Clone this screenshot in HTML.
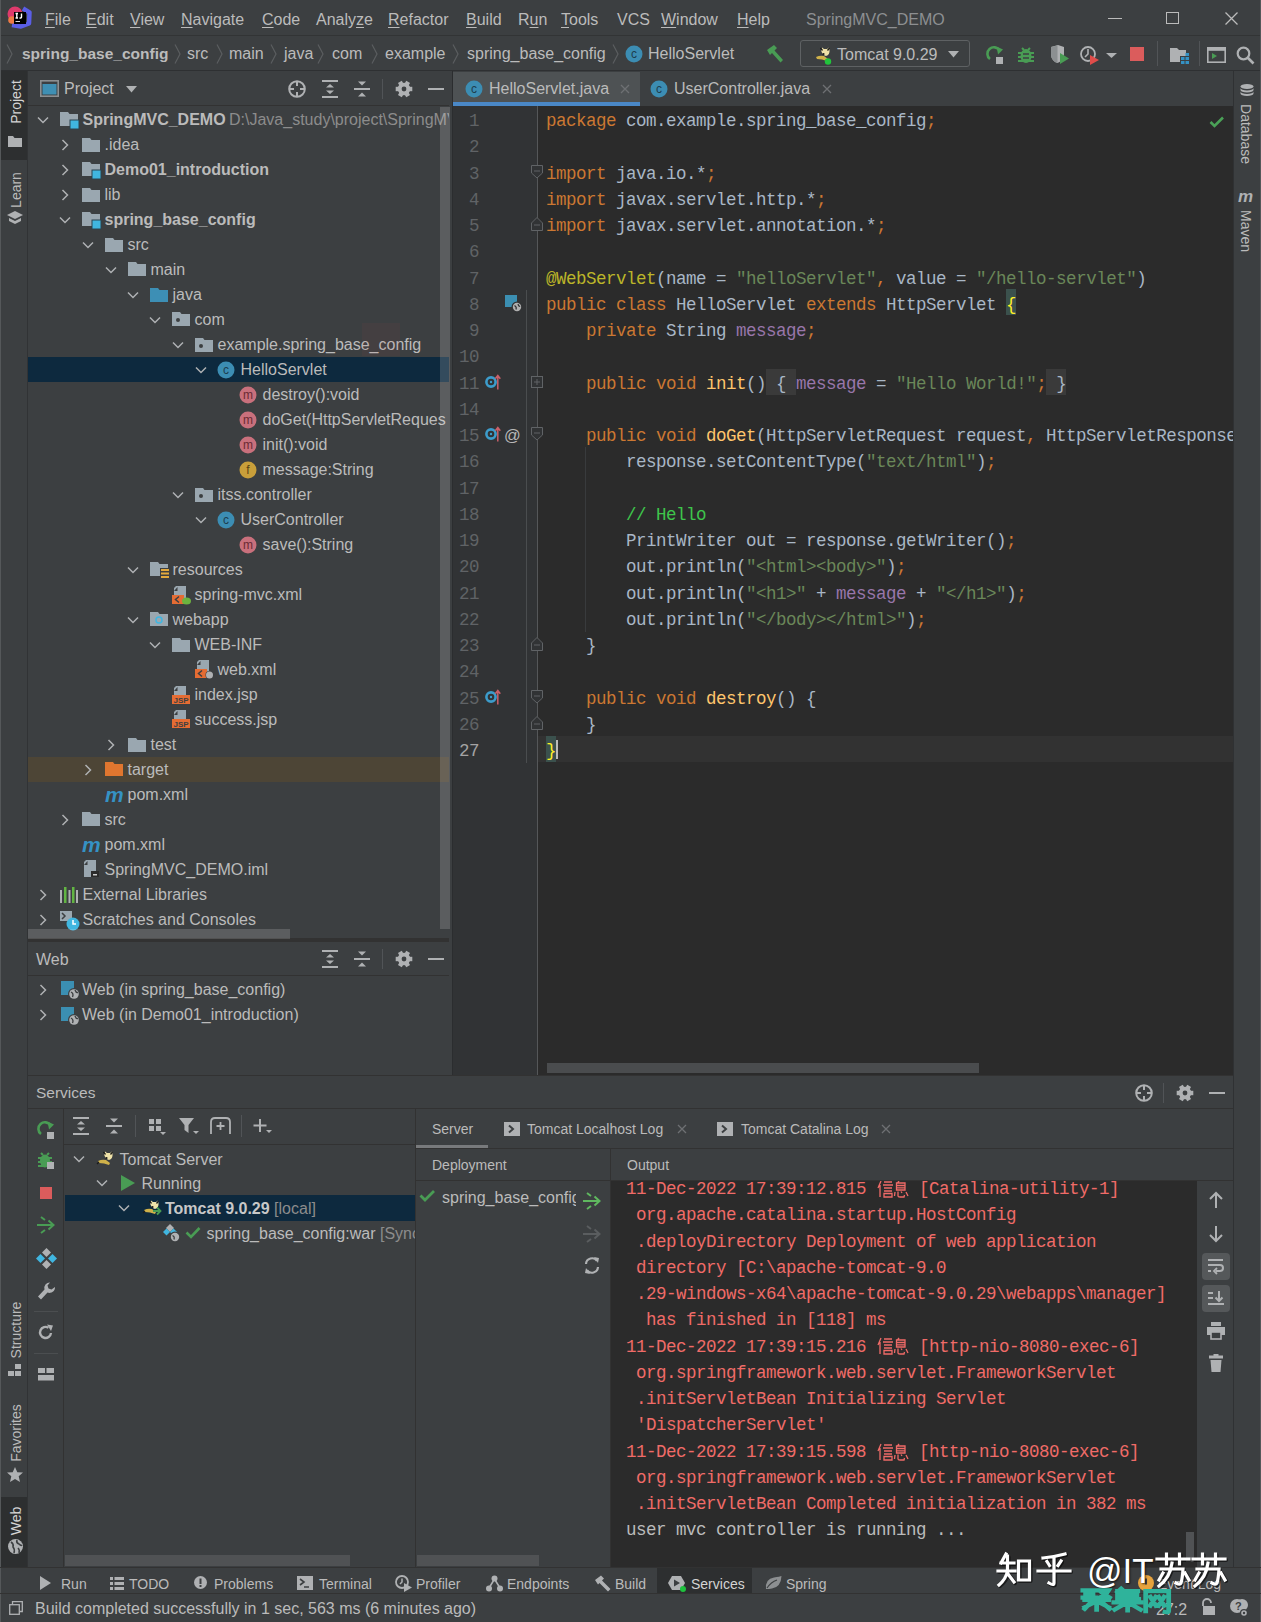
<!DOCTYPE html><html><head><meta charset="utf-8"><style>
*{margin:0;padding:0;box-sizing:border-box}
html,body{width:1261px;height:1622px;overflow:hidden;background:#3c3f41;font-family:"Liberation Sans",sans-serif;font-size:16px;color:#bbbbbb}
.a{position:absolute}
.t{position:absolute;white-space:pre;line-height:20px}
.m{font-family:"Liberation Mono",monospace;font-size:17.5px;letter-spacing:-0.5px}
.b{font-weight:bold}
svg{position:absolute;overflow:visible}
</style></head><body>
<div class="a" style="left:0px;top:35px;width:1261px;height:1px;background:#323435;"></div>
<div class="a" style="left:0px;top:70px;width:1261px;height:1px;background:#2e3032;"></div>
<div class="a" style="left:27px;top:71px;width:1px;height:1497px;background:#313335;"></div>
<div class="a" style="left:1px;top:71px;width:26px;height:89px;background:#2d2f30;"></div>
<div class="a" style="left:1px;top:1497px;width:26px;height:70px;background:#2d2f30;"></div>
<div class="a" style="left:0px;top:0px;width:1px;height:1622px;background:#55585a;"></div>
<div class="a" style="left:28px;top:105px;width:421px;height:1px;background:#323232;"></div>
<div class="a" style="left:449px;top:71px;width:3px;height:1004px;background:#3c3f41;"></div>
<div class="a" style="left:452px;top:71px;width:1px;height:1004px;background:#2b2d2f;"></div>
<div class="a" style="left:453px;top:106px;width:2px;height:969px;background:#2f3133;"></div>
<div class="a" style="left:28px;top:938px;width:421px;height:4px;background:#323232;"></div>
<div class="a" style="left:28px;top:975px;width:421px;height:1px;background:#323232;"></div>
<div class="a" style="left:453px;top:72px;width:187px;height:34px;background:#4e5254;"></div>
<div class="a" style="left:453px;top:102px;width:187px;height:4px;background:#4a88c7;"></div>
<div class="a" style="left:453px;top:106px;width:85px;height:969px;background:#313335;"></div>
<div class="a" style="left:538px;top:106px;width:695px;height:969px;background:#2b2b2b;"></div>
<div class="a" style="left:1233px;top:71px;width:1px;height:1497px;background:#2f3133;"></div>
<div class="a" style="left:1260px;top:0px;width:1px;height:1622px;background:#55585a;"></div>
<div class="a" style="left:28px;top:1075px;width:1205px;height:1px;background:#323232;"></div>
<div class="a" style="left:28px;top:1108px;width:1205px;height:1px;background:#323232;"></div>
<div class="a" style="left:63px;top:1109px;width:1px;height:459px;background:#323232;"></div>
<div class="a" style="left:64px;top:1144px;width:351px;height:1px;background:#323232;"></div>
<div class="a" style="left:415px;top:1109px;width:1px;height:459px;background:#323232;"></div>
<div class="a" style="left:416px;top:1148px;width:817px;height:1px;background:#323232;"></div>
<div class="a" style="left:416px;top:1145px;width:72px;height:3px;background:#787a7c;"></div>
<div class="a" style="left:416px;top:1180px;width:817px;height:1px;background:#323232;"></div>
<div class="a" style="left:610px;top:1148px;width:1px;height:420px;background:#323232;"></div>
<div class="a" style="left:611px;top:1181px;width:586px;height:387px;background:#2b2b2b;"></div>
<div class="a" style="left:65px;top:1195px;width:350px;height:26px;background:#0d293e;"></div>
<div class="a" style="left:0px;top:1567px;width:1261px;height:1px;background:#323232;"></div>
<div class="a" style="left:0px;top:1593px;width:1261px;height:1px;background:#323232;"></div>
<div class="a" style="left:657px;top:1568px;width:95px;height:25px;background:#2d2f30;"></div>
<div class="a" style="left:28px;top:357px;width:421px;height:25px;background:#0d293e;"></div>
<div class="a" style="left:28px;top:757px;width:421px;height:25px;background:#4d4536;"></div>
<div class="t " style="left:45px;top:10px;color:#bbbbbb;font-size:16px;"><u style="text-decoration-thickness:1px;text-underline-offset:2px">F</u>ile</div>
<div class="t " style="left:86px;top:10px;color:#bbbbbb;font-size:16px;"><u style="text-decoration-thickness:1px;text-underline-offset:2px">E</u>dit</div>
<div class="t " style="left:130px;top:10px;color:#bbbbbb;font-size:16px;"><u style="text-decoration-thickness:1px;text-underline-offset:2px">V</u>iew</div>
<div class="t " style="left:181px;top:10px;color:#bbbbbb;font-size:16px;"><u style="text-decoration-thickness:1px;text-underline-offset:2px">N</u>avigate</div>
<div class="t " style="left:262px;top:10px;color:#bbbbbb;font-size:16px;"><u style="text-decoration-thickness:1px;text-underline-offset:2px">C</u>ode</div>
<div class="t " style="left:316px;top:10px;color:#bbbbbb;font-size:16px;">Analy<u style="text-decoration-thickness:1px;text-underline-offset:2px">z</u>e</div>
<div class="t " style="left:388px;top:10px;color:#bbbbbb;font-size:16px;"><u style="text-decoration-thickness:1px;text-underline-offset:2px">R</u>efactor</div>
<div class="t " style="left:466px;top:10px;color:#bbbbbb;font-size:16px;"><u style="text-decoration-thickness:1px;text-underline-offset:2px">B</u>uild</div>
<div class="t " style="left:518px;top:10px;color:#bbbbbb;font-size:16px;">R<u style="text-decoration-thickness:1px;text-underline-offset:2px">u</u>n</div>
<div class="t " style="left:561px;top:10px;color:#bbbbbb;font-size:16px;"><u style="text-decoration-thickness:1px;text-underline-offset:2px">T</u>ools</div>
<div class="t " style="left:617px;top:10px;color:#bbbbbb;font-size:16px;">VCS</div>
<div class="t " style="left:661px;top:10px;color:#bbbbbb;font-size:16px;"><u style="text-decoration-thickness:1px;text-underline-offset:2px">W</u>indow</div>
<div class="t " style="left:737px;top:10px;color:#bbbbbb;font-size:16px;"><u style="text-decoration-thickness:1px;text-underline-offset:2px">H</u>elp</div>
<div class="t " style="left:806px;top:9.5px;color:#8d8f91;font-size:16px;">SpringMVC_DEMO</div>
<div class="a" style="left:0;top:0;width:1261px;height:1622px;clip-path:inset(106px 812px 684px 28px)">
<svg style="left:37px;top:115.5px;" width="12" height="8" viewBox="0 0 12 8"><path d="M1 1.5 L6 6.5 L11 1.5" fill="none" stroke="#afb1b3" stroke-width="1.5"/></svg>
<svg style="left:60px;top:110px;" width="20" height="20" viewBox="0 0 20 20"><path d="M0 2 H8 L9.5 4 H18 V16 H0 Z" fill="#9aa7b0"/><rect x="10" y="10" width="9" height="9" fill="#40b6e0" stroke="#2b4550" stroke-width="1"/></svg>
<div class="t b" style="left:82.5px;top:109.5px;color:#bbbbbb;font-size:16px;">SpringMVC_DEMO</div>
<svg style="left:61px;top:138.5px;" width="8" height="12" viewBox="0 0 8 12"><path d="M1.5 1 L6.5 6 L1.5 11" fill="none" stroke="#afb1b3" stroke-width="1.5"/></svg>
<svg style="left:82px;top:136px;" width="18" height="18" viewBox="0 0 18 18"><path d="M0 2 H8 L9.5 4 H18 V16 H0 Z" fill="#9aa7b0"/></svg>
<div class="t " style="left:104.5px;top:134.5px;color:#bbbbbb;font-size:16px;">.idea</div>
<svg style="left:61px;top:163.5px;" width="8" height="12" viewBox="0 0 8 12"><path d="M1.5 1 L6.5 6 L1.5 11" fill="none" stroke="#afb1b3" stroke-width="1.5"/></svg>
<svg style="left:82px;top:160px;" width="20" height="20" viewBox="0 0 20 20"><path d="M0 2 H8 L9.5 4 H18 V16 H0 Z" fill="#9aa7b0"/><rect x="10" y="10" width="9" height="9" fill="#40b6e0" stroke="#2b4550" stroke-width="1"/></svg>
<div class="t b" style="left:104.5px;top:159.5px;color:#bbbbbb;font-size:16px;">Demo01_introduction</div>
<svg style="left:61px;top:188.5px;" width="8" height="12" viewBox="0 0 8 12"><path d="M1.5 1 L6.5 6 L1.5 11" fill="none" stroke="#afb1b3" stroke-width="1.5"/></svg>
<svg style="left:82px;top:186px;" width="18" height="18" viewBox="0 0 18 18"><path d="M0 2 H8 L9.5 4 H18 V16 H0 Z" fill="#9aa7b0"/></svg>
<div class="t " style="left:104.5px;top:184.5px;color:#bbbbbb;font-size:16px;">lib</div>
<svg style="left:59px;top:215.5px;" width="12" height="8" viewBox="0 0 12 8"><path d="M1 1.5 L6 6.5 L11 1.5" fill="none" stroke="#afb1b3" stroke-width="1.5"/></svg>
<svg style="left:82px;top:210px;" width="20" height="20" viewBox="0 0 20 20"><path d="M0 2 H8 L9.5 4 H18 V16 H0 Z" fill="#9aa7b0"/><rect x="10" y="10" width="9" height="9" fill="#40b6e0" stroke="#2b4550" stroke-width="1"/></svg>
<div class="t b" style="left:104.5px;top:209.5px;color:#bbbbbb;font-size:16px;">spring_base_config</div>
<svg style="left:82px;top:240.5px;" width="12" height="8" viewBox="0 0 12 8"><path d="M1 1.5 L6 6.5 L11 1.5" fill="none" stroke="#afb1b3" stroke-width="1.5"/></svg>
<svg style="left:105px;top:236px;" width="18" height="18" viewBox="0 0 18 18"><path d="M0 2 H8 L9.5 4 H18 V16 H0 Z" fill="#9aa7b0"/></svg>
<div class="t " style="left:127.5px;top:234.5px;color:#bbbbbb;font-size:16px;">src</div>
<svg style="left:105px;top:265.5px;" width="12" height="8" viewBox="0 0 12 8"><path d="M1 1.5 L6 6.5 L11 1.5" fill="none" stroke="#afb1b3" stroke-width="1.5"/></svg>
<svg style="left:128px;top:260px;" width="18" height="18" viewBox="0 0 18 18"><path d="M0 2 H8 L9.5 4 H18 V16 H0 Z" fill="#9aa7b0"/></svg>
<div class="t " style="left:150.5px;top:259.5px;color:#bbbbbb;font-size:16px;">main</div>
<svg style="left:127px;top:290.5px;" width="12" height="8" viewBox="0 0 12 8"><path d="M1 1.5 L6 6.5 L11 1.5" fill="none" stroke="#afb1b3" stroke-width="1.5"/></svg>
<svg style="left:150px;top:286px;" width="18" height="18" viewBox="0 0 18 18"><path d="M0 2 H8 L9.5 4 H18 V16 H0 Z" fill="#3d8fb5"/></svg>
<div class="t " style="left:172.5px;top:284.5px;color:#bbbbbb;font-size:16px;">java</div>
<svg style="left:149px;top:315.5px;" width="12" height="8" viewBox="0 0 12 8"><path d="M1 1.5 L6 6.5 L11 1.5" fill="none" stroke="#afb1b3" stroke-width="1.5"/></svg>
<svg style="left:172px;top:310px;" width="18" height="18" viewBox="0 0 18 18"><path d="M0 2 H8 L9.5 4 H18 V16 H0 Z" fill="#9aa7b0"/><circle cx="6" cy="10" r="2" fill="#3c3f41"/></svg>
<div class="t " style="left:194.5px;top:309.5px;color:#bbbbbb;font-size:16px;">com</div>
<svg style="left:172px;top:340.5px;" width="12" height="8" viewBox="0 0 12 8"><path d="M1 1.5 L6 6.5 L11 1.5" fill="none" stroke="#afb1b3" stroke-width="1.5"/></svg>
<svg style="left:195px;top:336px;" width="18" height="18" viewBox="0 0 18 18"><path d="M0 2 H8 L9.5 4 H18 V16 H0 Z" fill="#9aa7b0"/><circle cx="6" cy="10" r="2" fill="#3c3f41"/></svg>
<div class="t " style="left:217.5px;top:334.5px;color:#bbbbbb;font-size:16px;">example.spring_base_config</div>
<svg style="left:195px;top:365.5px;" width="12" height="8" viewBox="0 0 12 8"><path d="M1 1.5 L6 6.5 L11 1.5" fill="none" stroke="#afb1b3" stroke-width="1.5"/></svg>
<svg style="left:217px;top:360.5px;" width="18" height="18" viewBox="0 0 18 18"><circle cx="9" cy="9" r="8.5" fill="#3c8db3"/><text x="9" y="13" text-anchor="middle" font-family="Liberation Sans" font-size="12" fill="#1d3d4e">c</text></svg>
<div class="t " style="left:240.5px;top:359.5px;color:#bbbbbb;font-size:16px;">HelloServlet</div>
<svg style="left:239px;top:385.5px;" width="18" height="18" viewBox="0 0 18 18"><circle cx="9" cy="9" r="8.5" fill="#c9707c"/><text x="9" y="13" text-anchor="middle" font-family="Liberation Sans" font-size="12" fill="#6b2a33">m</text></svg>
<div class="t " style="left:262.5px;top:384.5px;color:#bbbbbb;font-size:16px;">destroy():void</div>
<svg style="left:239px;top:410.5px;" width="18" height="18" viewBox="0 0 18 18"><circle cx="9" cy="9" r="8.5" fill="#c9707c"/><text x="9" y="13" text-anchor="middle" font-family="Liberation Sans" font-size="12" fill="#6b2a33">m</text></svg>
<div class="t " style="left:262.5px;top:409.5px;color:#bbbbbb;font-size:16px;">doGet(HttpServletReques</div>
<svg style="left:239px;top:435.5px;" width="18" height="18" viewBox="0 0 18 18"><circle cx="9" cy="9" r="8.5" fill="#c9707c"/><text x="9" y="13" text-anchor="middle" font-family="Liberation Sans" font-size="12" fill="#6b2a33">m</text></svg>
<div class="t " style="left:262.5px;top:434.5px;color:#bbbbbb;font-size:16px;">init():void</div>
<svg style="left:239px;top:460.5px;" width="18" height="18" viewBox="0 0 18 18"><circle cx="9" cy="9" r="8.5" fill="#c99f3a"/><text x="9" y="13" text-anchor="middle" font-family="Liberation Sans" font-size="12" fill="#5a4313">f</text></svg>
<div class="t " style="left:262.5px;top:459.5px;color:#bbbbbb;font-size:16px;">message:String</div>
<svg style="left:172px;top:490.5px;" width="12" height="8" viewBox="0 0 12 8"><path d="M1 1.5 L6 6.5 L11 1.5" fill="none" stroke="#afb1b3" stroke-width="1.5"/></svg>
<svg style="left:195px;top:486px;" width="18" height="18" viewBox="0 0 18 18"><path d="M0 2 H8 L9.5 4 H18 V16 H0 Z" fill="#9aa7b0"/><circle cx="6" cy="10" r="2" fill="#3c3f41"/></svg>
<div class="t " style="left:217.5px;top:484.5px;color:#bbbbbb;font-size:16px;">itss.controller</div>
<svg style="left:195px;top:515.5px;" width="12" height="8" viewBox="0 0 12 8"><path d="M1 1.5 L6 6.5 L11 1.5" fill="none" stroke="#afb1b3" stroke-width="1.5"/></svg>
<svg style="left:217px;top:510.5px;" width="18" height="18" viewBox="0 0 18 18"><circle cx="9" cy="9" r="8.5" fill="#3c8db3"/><text x="9" y="13" text-anchor="middle" font-family="Liberation Sans" font-size="12" fill="#1d3d4e">c</text></svg>
<div class="t " style="left:240.5px;top:509.5px;color:#bbbbbb;font-size:16px;">UserController</div>
<svg style="left:239px;top:535.5px;" width="18" height="18" viewBox="0 0 18 18"><circle cx="9" cy="9" r="8.5" fill="#c9707c"/><text x="9" y="13" text-anchor="middle" font-family="Liberation Sans" font-size="12" fill="#6b2a33">m</text></svg>
<div class="t " style="left:262.5px;top:534.5px;color:#bbbbbb;font-size:16px;">save():String</div>
<svg style="left:127px;top:565.5px;" width="12" height="8" viewBox="0 0 12 8"><path d="M1 1.5 L6 6.5 L11 1.5" fill="none" stroke="#afb1b3" stroke-width="1.5"/></svg>
<svg style="left:150px;top:560px;" width="20" height="20" viewBox="0 0 20 20"><path d="M0 2 H8 L9.5 4 H18 V16 H0 Z" fill="#9aa7b0"/><rect x="10" y="8" width="10" height="12" fill="#3c3f41"/><path d="M11 10h8M11 13.5h8M11 17h8" stroke="#e2a93d" stroke-width="2.2"/></svg>
<div class="t " style="left:172.5px;top:559.5px;color:#bbbbbb;font-size:16px;">resources</div>
<svg style="left:172px;top:586px;" width="20" height="20" viewBox="0 0 20 20"><path d="M4 0 H14 V17 H2 V2 Z" fill="#9aa7b0"/><path d="M2 5 H5.5 V1" fill="#3c3f41"/><rect x="0" y="9" width="12" height="9" fill="#e56c33"/><path d="M7 10.5 L3.5 13.5 L7 16.5" fill="none" stroke="#3c3f41" stroke-width="1.5"/><ellipse cx="14.5" cy="15" rx="4.5" ry="3.5" fill="#6db33f"/></svg>
<div class="t " style="left:194.5px;top:584.5px;color:#bbbbbb;font-size:16px;">spring-mvc.xml</div>
<svg style="left:127px;top:615.5px;" width="12" height="8" viewBox="0 0 12 8"><path d="M1 1.5 L6 6.5 L11 1.5" fill="none" stroke="#afb1b3" stroke-width="1.5"/></svg>
<svg style="left:150px;top:610px;" width="18" height="18" viewBox="0 0 18 18"><path d="M0 2 H8 L9.5 4 H18 V16 H0 Z" fill="#9aa7b0"/><circle cx="9" cy="10" r="3" fill="none" stroke="#40b6e0" stroke-width="1.5"/></svg>
<div class="t " style="left:172.5px;top:609.5px;color:#bbbbbb;font-size:16px;">webapp</div>
<svg style="left:149px;top:640.5px;" width="12" height="8" viewBox="0 0 12 8"><path d="M1 1.5 L6 6.5 L11 1.5" fill="none" stroke="#afb1b3" stroke-width="1.5"/></svg>
<svg style="left:172px;top:636px;" width="18" height="18" viewBox="0 0 18 18"><path d="M0 2 H8 L9.5 4 H18 V16 H0 Z" fill="#9aa7b0"/></svg>
<div class="t " style="left:194.5px;top:634.5px;color:#bbbbbb;font-size:16px;">WEB-INF</div>
<svg style="left:195px;top:660px;" width="20" height="20" viewBox="0 0 20 20"><path d="M4 0 H14 V17 H2 V2 Z" fill="#9aa7b0"/><path d="M2 5 H5.5 V1" fill="#3c3f41"/><rect x="0" y="9" width="12" height="9" fill="#e56c33"/><path d="M7 10.5 L3.5 13.5 L7 16.5" fill="none" stroke="#3c3f41" stroke-width="1.5"/><circle cx="14.5" cy="15" r="4" fill="#3c3f41"/><circle cx="14.5" cy="15" r="3.5" fill="#afb1b3"/></svg>
<div class="t " style="left:217.5px;top:659.5px;color:#bbbbbb;font-size:16px;">web.xml</div>
<svg style="left:172px;top:686px;" width="20" height="20" viewBox="0 0 20 20"><path d="M4 0 H14 V17 H2 V2 Z" fill="#9aa7b0"/><path d="M2 5 H5.5 V1" fill="#3c3f41"/><rect x="0" y="9" width="18" height="9" fill="#e56c33"/><text x="9" y="17" text-anchor="middle" font-family="Liberation Sans" font-size="8" font-weight="bold" fill="#3c3f41">JSP</text></svg>
<div class="t " style="left:194.5px;top:684.5px;color:#bbbbbb;font-size:16px;">index.jsp</div>
<svg style="left:172px;top:710px;" width="20" height="20" viewBox="0 0 20 20"><path d="M4 0 H14 V17 H2 V2 Z" fill="#9aa7b0"/><path d="M2 5 H5.5 V1" fill="#3c3f41"/><rect x="0" y="9" width="18" height="9" fill="#e56c33"/><text x="9" y="17" text-anchor="middle" font-family="Liberation Sans" font-size="8" font-weight="bold" fill="#3c3f41">JSP</text></svg>
<div class="t " style="left:194.5px;top:709.5px;color:#bbbbbb;font-size:16px;">success.jsp</div>
<svg style="left:107px;top:738.5px;" width="8" height="12" viewBox="0 0 8 12"><path d="M1.5 1 L6.5 6 L1.5 11" fill="none" stroke="#afb1b3" stroke-width="1.5"/></svg>
<svg style="left:128px;top:736px;" width="18" height="18" viewBox="0 0 18 18"><path d="M0 2 H8 L9.5 4 H18 V16 H0 Z" fill="#9aa7b0"/></svg>
<div class="t " style="left:150.5px;top:734.5px;color:#bbbbbb;font-size:16px;">test</div>
<svg style="left:84px;top:763.5px;" width="8" height="12" viewBox="0 0 8 12"><path d="M1.5 1 L6.5 6 L1.5 11" fill="none" stroke="#afb1b3" stroke-width="1.5"/></svg>
<svg style="left:105px;top:760px;" width="18" height="18" viewBox="0 0 18 18"><path d="M0 2 H8 L9.5 4 H18 V16 H0 Z" fill="#e0762f"/></svg>
<div class="t " style="left:127.5px;top:759.5px;color:#bbbbbb;font-size:16px;">target</div>
<svg style="left:105px;top:786px;" width="20" height="20" viewBox="0 0 20 20"><text x="0" y="16" font-family="Liberation Sans" font-style="italic" font-weight="bold" font-size="21" fill="#3592c4">m</text></svg>
<div class="t " style="left:127.5px;top:784.5px;color:#bbbbbb;font-size:16px;">pom.xml</div>
<svg style="left:61px;top:813.5px;" width="8" height="12" viewBox="0 0 8 12"><path d="M1.5 1 L6.5 6 L1.5 11" fill="none" stroke="#afb1b3" stroke-width="1.5"/></svg>
<svg style="left:82px;top:810px;" width="18" height="18" viewBox="0 0 18 18"><path d="M0 2 H8 L9.5 4 H18 V16 H0 Z" fill="#9aa7b0"/></svg>
<div class="t " style="left:104.5px;top:809.5px;color:#bbbbbb;font-size:16px;">src</div>
<svg style="left:82px;top:836px;" width="20" height="20" viewBox="0 0 20 20"><text x="0" y="16" font-family="Liberation Sans" font-style="italic" font-weight="bold" font-size="21" fill="#3592c4">m</text></svg>
<div class="t " style="left:104.5px;top:834.5px;color:#bbbbbb;font-size:16px;">pom.xml</div>
<svg style="left:82px;top:860px;" width="18" height="18" viewBox="0 0 18 18"><path d="M4 0 H14 V17 H2 V2 Z" fill="#9aa7b0"/><path d="M2 5 H5.5 V1" fill="#3c3f41"/><rect x="9" y="11" width="8" height="6" fill="#2b2b2b"/><rect x="11" y="14" width="4" height="1.5" fill="#ccc"/></svg>
<div class="t " style="left:104.5px;top:859.5px;color:#bbbbbb;font-size:16px;">SpringMVC_DEMO.iml</div>
<svg style="left:39px;top:888.5px;" width="8" height="12" viewBox="0 0 8 12"><path d="M1.5 1 L6.5 6 L1.5 11" fill="none" stroke="#afb1b3" stroke-width="1.5"/></svg>
<svg style="left:60px;top:886px;" width="20" height="18" viewBox="0 0 20 18"><rect x="0" y="4" width="2" height="13" fill="#afb1b3"/><rect x="4" y="1" width="2.5" height="16" fill="#62b543"/><rect x="8.5" y="4" width="2" height="13" fill="#afb1b3"/><rect x="12" y="1" width="2.5" height="16" fill="#62b543"/><rect x="16" y="4" width="2" height="13" fill="#afb1b3"/></svg>
<div class="t " style="left:82.5px;top:884.5px;color:#bbbbbb;font-size:16px;">External Libraries</div>
<svg style="left:39px;top:913.5px;" width="8" height="12" viewBox="0 0 8 12"><path d="M1.5 1 L6.5 6 L1.5 11" fill="none" stroke="#afb1b3" stroke-width="1.5"/></svg>
<svg style="left:60px;top:910px;" width="22" height="22" viewBox="0 0 22 22"><rect x="0" y="1" width="12" height="10" fill="#9aa7b0"/><path d="M2 3 L5 6 L2 9" fill="none" stroke="#3c3f41" stroke-width="1.5"/><circle cx="13" cy="14" r="6.5" fill="#40b6e0"/><path d="M13 10 V14 H16" fill="none" stroke="#fff" stroke-width="1.5"/></svg>
<div class="t " style="left:82.5px;top:909.5px;color:#bbbbbb;font-size:16px;">Scratches and Consoles</div>
<div class="t " style="left:229px;top:109.5px;color:#8c8c8c;font-size:16px;">D:\Java_study\project\SpringMVC_DEMO</div>
<div class="a" style="left:362px;top:323px;width:38px;height:33px;background:rgba(200,60,60,0.06);"></div>
</div>
<div class="a" style="left:440px;top:107px;width:10px;height:822px;background:rgba(255,255,255,0.16);"></div>
<div class="a" style="left:28px;top:929px;width:262px;height:10px;background:rgba(255,255,255,0.16);"></div>
<div class="a" style="left:538px;top:736px;width:695px;height:26px;background:#323232;"></div>
<div class="a" style="left:1006px;top:289px;width:10px;height:26px;background:#3b514d;"></div>
<div class="a" style="left:546px;top:736px;width:10px;height:26px;background:#3b514d;"></div>
<div class="a" style="left:766px;top:369px;width:30px;height:26px;background:#3a3a3a;"></div>
<div class="a" style="left:1046px;top:369px;width:20px;height:26px;background:#3a3a3a;"></div>
<div class="a" style="left:538px;top:106px;width:695px;height:969px;overflow:hidden">
<div class="t m" style="left:8px;top:5.00px;color:#a9b7c6"><span style="color:#cc7832;">package</span><span style="color:#a9b7c6;"> com.example.spring_base_config</span><span style="color:#cc7832;">;</span></div>
<div class="t m" style="left:8px;top:31.25px;color:#a9b7c6"></div>
<div class="t m" style="left:8px;top:57.50px;color:#a9b7c6"><span style="color:#cc7832;">import</span><span style="color:#a9b7c6;"> java.io.*</span><span style="color:#cc7832;">;</span></div>
<div class="t m" style="left:8px;top:83.75px;color:#a9b7c6"><span style="color:#cc7832;">import</span><span style="color:#a9b7c6;"> javax.servlet.http.*</span><span style="color:#cc7832;">;</span></div>
<div class="t m" style="left:8px;top:110.00px;color:#a9b7c6"><span style="color:#cc7832;">import</span><span style="color:#a9b7c6;"> javax.servlet.annotation.*</span><span style="color:#cc7832;">;</span></div>
<div class="t m" style="left:8px;top:136.25px;color:#a9b7c6"></div>
<div class="t m" style="left:8px;top:162.50px;color:#a9b7c6"><span style="color:#bbb529;">@WebServlet</span><span style="color:#a9b7c6;">(name = </span><span style="color:#6a8759;">&quot;helloServlet&quot;</span><span style="color:#cc7832;">,</span><span style="color:#a9b7c6;"> value = </span><span style="color:#6a8759;">&quot;/hello-servlet&quot;</span><span style="color:#a9b7c6;">)</span></div>
<div class="t m" style="left:8px;top:188.75px;color:#a9b7c6"><span style="color:#cc7832;">public class </span><span style="color:#a9b7c6;">HelloServlet </span><span style="color:#cc7832;">extends </span><span style="color:#a9b7c6;">HttpServlet </span><span style="color:#ffef28;">{</span></div>
<div class="t m" style="left:8px;top:215.00px;color:#a9b7c6"><span style="color:#cc7832;">    private </span><span style="color:#a9b7c6;">String </span><span style="color:#9876aa;">message</span><span style="color:#cc7832;">;</span></div>
<div class="t m" style="left:8px;top:241.25px;color:#a9b7c6"></div>
<div class="t m" style="left:8px;top:267.50px;color:#a9b7c6"><span style="color:#cc7832;">    public void </span><span style="color:#ffc66d;">init</span><span style="color:#a9b7c6;">()</span><span style="color:#a9b7c6;"> { </span><span style="color:#9876aa;">message</span><span style="color:#a9b7c6;"> = </span><span style="color:#6a8759;">&quot;Hello World!&quot;</span><span style="color:#cc7832;">;</span><span style="color:#a9b7c6;"> }</span></div>
<div class="t m" style="left:8px;top:293.75px;color:#a9b7c6"></div>
<div class="t m" style="left:8px;top:320.00px;color:#a9b7c6"><span style="color:#cc7832;">    public void </span><span style="color:#ffc66d;">doGet</span><span style="color:#a9b7c6;">(HttpServletRequest request</span><span style="color:#cc7832;">,</span><span style="color:#a9b7c6;"> HttpServletResponse response) throws ServletException</span></div>
<div class="t m" style="left:8px;top:346.25px;color:#a9b7c6"><span style="color:#a9b7c6;">        response.setContentType(</span><span style="color:#6a8759;">&quot;text/html&quot;</span><span style="color:#a9b7c6;">)</span><span style="color:#cc7832;">;</span></div>
<div class="t m" style="left:8px;top:372.50px;color:#a9b7c6"></div>
<div class="t m" style="left:8px;top:398.75px;color:#a9b7c6"><span style="color:#3ec54b;">        // Hello</span></div>
<div class="t m" style="left:8px;top:425.00px;color:#a9b7c6"><span style="color:#a9b7c6;">        PrintWriter out = response.getWriter()</span><span style="color:#cc7832;">;</span></div>
<div class="t m" style="left:8px;top:451.25px;color:#a9b7c6"><span style="color:#a9b7c6;">        out.println(</span><span style="color:#6a8759;">&quot;&lt;html&gt;&lt;body&gt;&quot;</span><span style="color:#a9b7c6;">)</span><span style="color:#cc7832;">;</span></div>
<div class="t m" style="left:8px;top:477.50px;color:#a9b7c6"><span style="color:#a9b7c6;">        out.println(</span><span style="color:#6a8759;">&quot;&lt;h1&gt;&quot;</span><span style="color:#a9b7c6;"> + </span><span style="color:#9876aa;">message</span><span style="color:#a9b7c6;"> + </span><span style="color:#6a8759;">&quot;&lt;/h1&gt;&quot;</span><span style="color:#a9b7c6;">)</span><span style="color:#cc7832;">;</span></div>
<div class="t m" style="left:8px;top:503.75px;color:#a9b7c6"><span style="color:#a9b7c6;">        out.println(</span><span style="color:#6a8759;">&quot;&lt;/body&gt;&lt;/html&gt;&quot;</span><span style="color:#a9b7c6;">)</span><span style="color:#cc7832;">;</span></div>
<div class="t m" style="left:8px;top:530.00px;color:#a9b7c6"><span style="color:#a9b7c6;">    }</span></div>
<div class="t m" style="left:8px;top:556.25px;color:#a9b7c6"></div>
<div class="t m" style="left:8px;top:582.50px;color:#a9b7c6"><span style="color:#cc7832;">    public void </span><span style="color:#ffc66d;">destroy</span><span style="color:#a9b7c6;">() {</span></div>
<div class="t m" style="left:8px;top:608.75px;color:#a9b7c6"><span style="color:#a9b7c6;">    }</span></div>
<div class="t m" style="left:8px;top:635.00px;color:#a9b7c6"><span style="color:#ffef28;">}</span></div>
</div>
<div class="a" style="left:556px;top:740px;width:2px;height:19px;background:#bbbbbb;"></div>
<div class="t m" style="left:455px;top:111.00px;width:24px;text-align:right;color:#606366">1</div>
<div class="t m" style="left:455px;top:137.25px;width:24px;text-align:right;color:#606366">2</div>
<div class="t m" style="left:455px;top:163.50px;width:24px;text-align:right;color:#606366">3</div>
<div class="t m" style="left:455px;top:189.75px;width:24px;text-align:right;color:#606366">4</div>
<div class="t m" style="left:455px;top:216.00px;width:24px;text-align:right;color:#606366">5</div>
<div class="t m" style="left:455px;top:242.25px;width:24px;text-align:right;color:#606366">6</div>
<div class="t m" style="left:455px;top:268.50px;width:24px;text-align:right;color:#606366">7</div>
<div class="t m" style="left:455px;top:294.75px;width:24px;text-align:right;color:#606366">8</div>
<div class="t m" style="left:455px;top:321.00px;width:24px;text-align:right;color:#606366">9</div>
<div class="t m" style="left:455px;top:347.25px;width:24px;text-align:right;color:#606366">10</div>
<div class="t m" style="left:455px;top:373.50px;width:24px;text-align:right;color:#606366">11</div>
<div class="t m" style="left:455px;top:399.75px;width:24px;text-align:right;color:#606366">14</div>
<div class="t m" style="left:455px;top:426.00px;width:24px;text-align:right;color:#606366">15</div>
<div class="t m" style="left:455px;top:452.25px;width:24px;text-align:right;color:#606366">16</div>
<div class="t m" style="left:455px;top:478.50px;width:24px;text-align:right;color:#606366">17</div>
<div class="t m" style="left:455px;top:504.75px;width:24px;text-align:right;color:#606366">18</div>
<div class="t m" style="left:455px;top:531.00px;width:24px;text-align:right;color:#606366">19</div>
<div class="t m" style="left:455px;top:557.25px;width:24px;text-align:right;color:#606366">20</div>
<div class="t m" style="left:455px;top:583.50px;width:24px;text-align:right;color:#606366">21</div>
<div class="t m" style="left:455px;top:609.75px;width:24px;text-align:right;color:#606366">22</div>
<div class="t m" style="left:455px;top:636.00px;width:24px;text-align:right;color:#606366">23</div>
<div class="t m" style="left:455px;top:662.25px;width:24px;text-align:right;color:#606366">24</div>
<div class="t m" style="left:455px;top:688.50px;width:24px;text-align:right;color:#606366">25</div>
<div class="t m" style="left:455px;top:714.75px;width:24px;text-align:right;color:#606366">26</div>
<div class="t m" style="left:455px;top:741.00px;width:24px;text-align:right;color:#a4a3a3">27</div>
<div class="a" style="left:526px;top:290px;width:1px;height:473px;background:#4a4d4f;"></div>
<div class="a" style="left:537px;top:106px;width:1px;height:969px;background:#555759;"></div>
<div class="a" style="left:585px;top:447px;width:1px;height:185px;background:#393b3d;"></div>
<svg style="left:531px;top:164.5px;" width="13" height="14" viewBox="0 0 13 14"><path d="M0.5 0.5 H11.5 V8 L6 13 L0.5 8 Z" fill="#313335" stroke="#606366"/><path d="M3 6 H9" stroke="#606366"/></svg>
<svg style="left:531px;top:217.0px;" width="13" height="14" viewBox="0 0 13 14"><path d="M0.5 13.5 H11.5 V6 L6 0.5 L0.5 6 Z" fill="#313335" stroke="#606366"/><path d="M3 8 H9" stroke="#606366"/></svg>
<svg style="left:531px;top:375.5px;" width="12" height="12" viewBox="0 0 12 12"><rect x="0.5" y="0.5" width="11" height="11" fill="#313335" stroke="#606366"/><path d="M3 6 H9 M6 3 V9" stroke="#606366"/></svg>
<svg style="left:531px;top:427.0px;" width="13" height="14" viewBox="0 0 13 14"><path d="M0.5 0.5 H11.5 V8 L6 13 L0.5 8 Z" fill="#313335" stroke="#606366"/><path d="M3 6 H9" stroke="#606366"/></svg>
<svg style="left:531px;top:637.0px;" width="13" height="14" viewBox="0 0 13 14"><path d="M0.5 13.5 H11.5 V6 L6 0.5 L0.5 6 Z" fill="#313335" stroke="#606366"/><path d="M3 8 H9" stroke="#606366"/></svg>
<svg style="left:531px;top:689.5px;" width="13" height="14" viewBox="0 0 13 14"><path d="M0.5 0.5 H11.5 V8 L6 13 L0.5 8 Z" fill="#313335" stroke="#606366"/><path d="M3 6 H9" stroke="#606366"/></svg>
<svg style="left:531px;top:715.75px;" width="13" height="14" viewBox="0 0 13 14"><path d="M0.5 13.5 H11.5 V6 L6 0.5 L0.5 6 Z" fill="#313335" stroke="#606366"/><path d="M3 8 H9" stroke="#606366"/></svg>
<svg style="left:485px;top:373.5px;" width="18" height="16" viewBox="0 0 18 16"><circle cx="6" cy="8" r="4.6" fill="none" stroke="#3c9ccb" stroke-width="2.6"/><circle cx="6" cy="8" r="1.2" fill="#3c9ccb"/><path d="M12.8 15.5 V2 M10.3 4.8 L12.8 1.5 L15.3 4.8" fill="none" stroke="#c9606a" stroke-width="1.5"/></svg>
<svg style="left:485px;top:426.0px;" width="18" height="16" viewBox="0 0 18 16"><circle cx="6" cy="8" r="4.6" fill="none" stroke="#3c9ccb" stroke-width="2.6"/><circle cx="6" cy="8" r="1.2" fill="#3c9ccb"/><path d="M12.8 15.5 V2 M10.3 4.8 L12.8 1.5 L15.3 4.8" fill="none" stroke="#c9606a" stroke-width="1.5"/></svg>
<svg style="left:485px;top:688.5px;" width="18" height="16" viewBox="0 0 18 16"><circle cx="6" cy="8" r="4.6" fill="none" stroke="#3c9ccb" stroke-width="2.6"/><circle cx="6" cy="8" r="1.2" fill="#3c9ccb"/><path d="M12.8 15.5 V2 M10.3 4.8 L12.8 1.5 L15.3 4.8" fill="none" stroke="#c9606a" stroke-width="1.5"/></svg>
<div class="t " style="left:504px;top:425.0px;color:#b8b8b8;font-size:16.5px;">@</div>
<svg style="left:505px;top:295px;" width="18" height="18" viewBox="0 0 18 18"><rect x="0" y="0" width="12" height="12" fill="#3b8fb2"/><circle cx="12" cy="12" r="5.5" fill="#313335"/><circle cx="12" cy="12" r="4.2" fill="#b0b0b0"/><path d="M9.5 10.5 Q12 12 11 14.5 M13 9 Q14 12 15 11" stroke="#313335" stroke-width="1.2" fill="none"/></svg>
<svg style="left:1209px;top:115px;" width="16" height="14" viewBox="0 0 16 14"><path d="M1.5 7 L5.5 11 L14 2.5" fill="none" stroke="#4aa157" stroke-width="2.6"/></svg>
<div class="a" style="left:547px;top:1063px;width:432px;height:10px;background:#4a4c4e;"></div>
<svg style="left:0px;top:0px;" width="36" height="35" viewBox="0 0 36 35"><path d="M23 8.5 L29.5 12.5 L29 23.5 L21 26.5 L12 25" fill="none" stroke="#5a5ee6" stroke-width="4.5" stroke-linejoin="round"/><circle cx="15" cy="14" r="7.5" fill="#de3a6c"/><circle cx="12" cy="20" r="3.8" fill="#ee7a45"/><rect x="14" y="12" width="12" height="12" fill="#000"/><path d="M15.5 13.5 H18 M16.8 13.5 V18 M15.5 18 H18 M21.5 13.5 V17 Q21.5 18.3 19.5 18" fill="none" stroke="#fff" stroke-width="1.4"/><rect x="15.5" y="21" width="4.5" height="1" fill="#ddd"/></svg>
<div class="a" style="left:1108px;top:18px;width:14px;height:1px;background:#bbbbbb;"></div>
<div class="a" style="left:1166px;top:12px;width:13px;height:12px;background:transparent;border:1.3px solid #bbbbbb"></div>
<svg style="left:1225px;top:12px;" width="13" height="13" viewBox="0 0 13 13"><path d="M0.5 0.5 L12.5 12.5 M12.5 0.5 L0.5 12.5" stroke="#bbbbbb" stroke-width="1.3"/></svg>
<svg style="left:6px;top:44px;" width="7" height="20" viewBox="0 0 7 20"><path d="M1 0.5 L6 10 L1 19.5" fill="none" stroke="#5b5e60" stroke-width="1.2"/></svg>
<div class="t b" style="left:22px;top:44px;color:#bbbbbb;font-size:15.5px;">spring_base_config</div>
<svg style="left:174px;top:44px;" width="7" height="20" viewBox="0 0 7 20"><path d="M1 0.5 L6 10 L1 19.5" fill="none" stroke="#5b5e60" stroke-width="1.2"/></svg>
<div class="t " style="left:187px;top:44px;color:#bbbbbb;font-size:16px;">src</div>
<svg style="left:216px;top:44px;" width="7" height="20" viewBox="0 0 7 20"><path d="M1 0.5 L6 10 L1 19.5" fill="none" stroke="#5b5e60" stroke-width="1.2"/></svg>
<div class="t " style="left:229px;top:44px;color:#bbbbbb;font-size:16px;">main</div>
<svg style="left:270px;top:44px;" width="7" height="20" viewBox="0 0 7 20"><path d="M1 0.5 L6 10 L1 19.5" fill="none" stroke="#5b5e60" stroke-width="1.2"/></svg>
<div class="t " style="left:284px;top:44px;color:#bbbbbb;font-size:16px;">java</div>
<svg style="left:317px;top:44px;" width="7" height="20" viewBox="0 0 7 20"><path d="M1 0.5 L6 10 L1 19.5" fill="none" stroke="#5b5e60" stroke-width="1.2"/></svg>
<div class="t " style="left:332px;top:44px;color:#bbbbbb;font-size:16px;">com</div>
<svg style="left:371px;top:44px;" width="7" height="20" viewBox="0 0 7 20"><path d="M1 0.5 L6 10 L1 19.5" fill="none" stroke="#5b5e60" stroke-width="1.2"/></svg>
<div class="t " style="left:385px;top:44px;color:#bbbbbb;font-size:16px;">example</div>
<svg style="left:452px;top:44px;" width="7" height="20" viewBox="0 0 7 20"><path d="M1 0.5 L6 10 L1 19.5" fill="none" stroke="#5b5e60" stroke-width="1.2"/></svg>
<div class="t " style="left:467px;top:44px;color:#bbbbbb;font-size:16px;">spring_base_config</div>
<svg style="left:612px;top:44px;" width="7" height="20" viewBox="0 0 7 20"><path d="M1 0.5 L6 10 L1 19.5" fill="none" stroke="#5b5e60" stroke-width="1.2"/></svg>
<div class="t " style="left:648px;top:44px;color:#bbbbbb;font-size:16px;">HelloServlet</div>
<svg style="left:625px;top:45px;" width="18" height="18" viewBox="0 0 18 18"><circle cx="9" cy="9" r="8.5" fill="#3c8db3"/><text x="9" y="13" text-anchor="middle" font-family="Liberation Sans" font-size="12" fill="#1d3d4e">c</text></svg>
<svg style="left:765px;top:44px;" width="20" height="20" viewBox="0 0 20 20"><path d="M2 6 L9 1 L12 4 L9.5 6.5 L18 16 L15.5 18.5 L7 9 L5 11 Z" fill="#499c54"/></svg>
<div class="a" style="left:800px;top:40px;width:170px;height:27px;background:transparent;border:1px solid #5e6163;border-radius:3px"></div>
<svg style="left:815px;top:47px;" width="18" height="18" viewBox="0 0 18 18"><path d="M1 10 Q5 8 9 9 L13 12 L12 14 Q7 12 2 12 Z" fill="#cfb14a"/><path d="M6 3 L7 0.5 L9 2 H12 L14 0.5 L14.5 3 Q15 8 11 9 Q7 8 6 3 Z" fill="#efe2a8"/><path d="M5.5 1 L7.5 3.5 M14.5 1 L12.5 3.5" stroke="#1a1a1a" stroke-width="1.3"/><circle cx="8.5" cy="7" r="1.1" fill="#1a1a1a"/><circle cx="13" cy="14.5" r="3.2" fill="#22c33c"/></svg>
<div class="t " style="left:837px;top:45px;color:#bbbbbb;font-size:16px;">Tomcat 9.0.29</div>
<svg style="left:948px;top:51px;" width="11" height="7" viewBox="0 0 11 7"><path d="M0 0 H11 L5.5 6.5 Z" fill="#afb1b3"/></svg>
<svg style="left:986px;top:46px;" width="19" height="18" viewBox="0 0 19 18"><path d="M4 13 A6.5 6.5 0 1 1 13.5 4.5" fill="none" stroke="#499c54" stroke-width="2.6"/><path d="M10.5 0.5 L17 3.5 L12 8.5 Z" fill="#499c54"/><rect x="10" y="11" width="7" height="7" fill="#afb1b3"/></svg>
<svg style="left:1017px;top:45px;" width="18" height="19" viewBox="0 0 18 19"><ellipse cx="9" cy="11" rx="5.5" ry="7" fill="#499c54"/><path d="M1 8 H17 M1 12 H17 M1 16 H17 M5 3 L7 5 M13 3 L11 5" stroke="#499c54" stroke-width="2"/><path d="M6 9 H12 M6 13 H12" stroke="#3c3f41" stroke-width="1.3"/></svg>
<svg style="left:1050px;top:45px;" width="20" height="20" viewBox="0 0 20 20"><path d="M1 2 L8 0 L14 2 V9 C14 14 10 17 7.5 18 C4 17 1 14 1 9 Z" fill="#afb1b3"/><path d="M7.5 0.5 V18 C4 17 1 14 1 9 V2 Z" fill="#8c9092"/><path d="M10 8 L19 13.5 L10 19 Z" fill="#499c54"/></svg>
<svg style="left:1080px;top:46px;" width="20" height="19" viewBox="0 0 20 19"><circle cx="8" cy="8" r="7" fill="none" stroke="#afb1b3" stroke-width="1.8"/><path d="M8 3 V8 L5 11" fill="none" stroke="#afb1b3" stroke-width="1.6"/><path d="M10 9 L19 14 L10 19 Z" fill="#e04d4a"/></svg>
<svg style="left:1106px;top:53px;" width="11" height="5" viewBox="0 0 11 5"><path d="M0 0 H11 L5.5 5 Z" fill="#afb1b3"/></svg>
<div class="a" style="left:1130px;top:47px;width:14px;height:14px;background:#db5c5c;"></div>
<div class="a" style="left:1157px;top:41px;width:1px;height:25px;background:#515457;"></div>
<svg style="left:1170px;top:46px;" width="20" height="18" viewBox="0 0 20 18"><path d="M0 2 H7 L9 4 H16 V10 H10 V16 H0 Z" fill="#afb1b3"/><rect x="11" y="11" width="3.5" height="3" fill="#3592c4"/><rect x="15.5" y="11" width="3.5" height="3" fill="#3592c4"/><rect x="11" y="15" width="3.5" height="3" fill="#3592c4"/><rect x="15.5" y="15" width="3.5" height="3" fill="#3592c4"/><rect x="15.5" y="7" width="3.5" height="3" fill="#3592c4"/></svg>
<div class="a" style="left:1199px;top:41px;width:1px;height:25px;background:#515457;"></div>
<svg style="left:1207px;top:47px;" width="19" height="16" viewBox="0 0 19 16"><rect x="0.8" y="0.8" width="17.4" height="14.4" fill="none" stroke="#afb1b3" stroke-width="1.6"/><rect x="0.8" y="0.8" width="17.4" height="3" fill="#afb1b3"/><path d="M5 6 L10 9 L5 12 Z" fill="#499c54"/></svg>
<svg style="left:1236px;top:46px;" width="19" height="19" viewBox="0 0 19 19"><circle cx="7.5" cy="7.5" r="5.8" fill="none" stroke="#afb1b3" stroke-width="2.2"/><path d="M11.5 11.5 L17.5 17.5" stroke="#afb1b3" stroke-width="2.6"/></svg>
<svg style="left:465px;top:80px;" width="18" height="18" viewBox="0 0 18 18"><circle cx="9" cy="9" r="8.5" fill="#3c8db3"/><text x="9" y="13" text-anchor="middle" font-family="Liberation Sans" font-size="12" fill="#1d3d4e">c</text></svg>
<div class="t " style="left:489px;top:79px;color:#bbbbbb;font-size:16px;">HelloServlet.java</div>
<svg style="left:620px;top:84px;" width="10" height="10" viewBox="0 0 10 10"><path d="M1 1 L9 9 M9 1 L1 9" stroke="#6e7073" stroke-width="1.3"/></svg>
<svg style="left:650px;top:80px;" width="18" height="18" viewBox="0 0 18 18"><circle cx="9" cy="9" r="8.5" fill="#3c8db3"/><text x="9" y="13" text-anchor="middle" font-family="Liberation Sans" font-size="12" fill="#1d3d4e">c</text></svg>
<div class="t " style="left:674px;top:79px;color:#bbbbbb;font-size:16px;">UserController.java</div>
<svg style="left:822px;top:84px;" width="10" height="10" viewBox="0 0 10 10"><path d="M1 1 L9 9 M9 1 L1 9" stroke="#6e7073" stroke-width="1.3"/></svg>
<svg style="left:40px;top:80px;" width="19" height="17" viewBox="0 0 19 17"><rect x="0.8" y="0.8" width="17.4" height="15.4" fill="none" stroke="#8c8f91" stroke-width="1.6"/><rect x="2.5" y="4" width="14" height="10.5" fill="#3f8fb3"/></svg>
<div class="t " style="left:64px;top:79px;color:#bbbbbb;font-size:16px;">Project</div>
<svg style="left:126px;top:86px;" width="11" height="7" viewBox="0 0 11 7"><path d="M0 0 H11 L5.5 6.5 Z" fill="#afb1b3"/></svg>
<svg style="left:288px;top:80px;" width="18" height="18" viewBox="0 0 18 18"><circle cx="9" cy="9" r="7.8" fill="none" stroke="#afb1b3" stroke-width="2"/><path d="M9 1.5 V6 M9 12 V16.5 M1.5 9 H6 M12 9 H16.5" stroke="#afb1b3" stroke-width="2"/></svg>
<svg style="left:322px;top:80px;" width="16" height="18" viewBox="0 0 16 18"><path d="M0 1 H16 M0 17 H16" stroke="#afb1b3" stroke-width="2"/><path d="M4 7.5 L8 4 L12 7.5 Z M4 10.5 L8 14 L12 10.5 Z" fill="#afb1b3"/></svg>
<svg style="left:354px;top:81px;" width="16" height="16" viewBox="0 0 16 16"><path d="M0 8 H16" stroke="#afb1b3" stroke-width="2"/><path d="M4 0.5 L8 4.5 L12 0.5 Z M4 15.5 L8 11.5 L12 15.5 Z" fill="#afb1b3"/></svg>
<div class="a" style="left:382px;top:79px;width:1px;height:20px;background:#515457;"></div>
<svg style="left:395px;top:80px;" width="18" height="18" viewBox="0 0 18 18"><g transform="translate(9 9)"><rect x="-2.2" y="-8.3" width="4.4" height="4.5" transform="rotate(30)" fill="#afb1b3"/><rect x="-2.2" y="-8.3" width="4.4" height="4.5" transform="rotate(90)" fill="#afb1b3"/><rect x="-2.2" y="-8.3" width="4.4" height="4.5" transform="rotate(150)" fill="#afb1b3"/><rect x="-2.2" y="-8.3" width="4.4" height="4.5" transform="rotate(210)" fill="#afb1b3"/><rect x="-2.2" y="-8.3" width="4.4" height="4.5" transform="rotate(270)" fill="#afb1b3"/><rect x="-2.2" y="-8.3" width="4.4" height="4.5" transform="rotate(330)" fill="#afb1b3"/><circle r="6.3" fill="#afb1b3"/><circle r="2.4" fill="#3c3f41"/></g></svg>
<div class="a" style="left:428px;top:88px;width:16px;height:2px;background:#afb1b3;"></div>
<div class="t" style="left:-44px;top:92px;width:120px;text-align:center;color:#d4d4d4;font-size:14px;transform:rotate(-90deg)">Project</div>
<svg style="left:8px;top:135px;" width="14" height="12" viewBox="0 0 14 12"><path d="M0 1 H5 L6.5 3 H14 V12 H0 Z" fill="#afb1b3"/></svg>
<div class="t" style="left:-44px;top:180px;width:120px;text-align:center;color:#bbbbbb;font-size:14px;transform:rotate(-90deg)">Learn</div>
<svg style="left:7px;top:211px;" width="16" height="14" viewBox="0 0 16 14"><path d="M8 0 L16 4 L8 8 L0 4 Z" fill="#afb1b3"/><path d="M2 7 V10 L8 13 L14 10 V7 L8 10 Z" fill="#afb1b3"/></svg>
<div class="t" style="left:-44px;top:1320px;width:120px;text-align:center;color:#bbbbbb;font-size:14px;transform:rotate(-90deg)">Structure</div>
<svg style="left:8px;top:1364px;" width="14" height="13" viewBox="0 0 14 13"><rect x="7" y="0" width="6" height="5" fill="#afb1b3"/><rect x="0" y="7" width="6" height="5" fill="#afb1b3"/><rect x="7" y="7" width="6" height="5" fill="#afb1b3"/></svg>
<div class="t" style="left:-44px;top:1423px;width:120px;text-align:center;color:#bbbbbb;font-size:14px;transform:rotate(-90deg)">Favorites</div>
<svg style="left:7px;top:1467px;" width="16" height="15" viewBox="0 0 16 15"><path d="M8 0 L10.3 5.2 L16 5.6 L11.7 9.3 L13 15 L8 12 L3 15 L4.3 9.3 L0 5.6 L5.7 5.2 Z" fill="#afb1b3"/></svg>
<div class="t" style="left:-44px;top:1511px;width:120px;text-align:center;color:#d4d4d4;font-size:14px;transform:rotate(-90deg)">Web</div>
<svg style="left:8px;top:1539px;" width="15" height="15" viewBox="0 0 15 15"><circle cx="7.5" cy="7.5" r="7.5" fill="#afb1b3"/><path d="M3 3 Q6 5 5 8 Q7 10 6 14 M9 1 Q8 4 11 5 Q13 7 14 6 M10 9 Q12 11 11 14" stroke="#3c3f41" stroke-width="1.6" fill="none"/></svg>
<svg style="left:1240px;top:84px;" width="14" height="12" viewBox="0 0 14 12"><ellipse cx="7" cy="2.5" rx="6.5" ry="2.5" fill="#afb1b3"/><path d="M0.5 4 V6 A6.5 2.5 0 0 0 13.5 6 V4 A6.5 2.5 0 0 1 0.5 4 Z M0.5 7.5 V9.5 A6.5 2.5 0 0 0 13.5 9.5 V7.5 A6.5 2.5 0 0 1 0.5 7.5 Z" fill="#afb1b3"/></svg>
<div class="t" style="left:1186px;top:124px;width:120px;text-align:center;color:#bbbbbb;font-size:14px;transform:rotate(90deg)">Database</div>
<svg style="left:1238px;top:189px;" width="18" height="14" viewBox="0 0 18 14"><text x="0" y="13" font-family="Liberation Sans" font-style="italic" font-weight="bold" font-size="17" fill="#afb1b3">m</text></svg>
<div class="t" style="left:1186px;top:221px;width:120px;text-align:center;color:#bbbbbb;font-size:14px;transform:rotate(90deg)">Maven</div>
<div class="t " style="left:36px;top:949.5px;color:#bbbbbb;font-size:16px;">Web</div>
<svg style="left:322px;top:950px;" width="16" height="18" viewBox="0 0 16 18"><path d="M0 1 H16 M0 17 H16" stroke="#afb1b3" stroke-width="2"/><path d="M4 7.5 L8 4 L12 7.5 Z M4 10.5 L8 14 L12 10.5 Z" fill="#afb1b3"/></svg>
<svg style="left:354px;top:951px;" width="16" height="16" viewBox="0 0 16 16"><path d="M0 8 H16" stroke="#afb1b3" stroke-width="2"/><path d="M4 0.5 L8 4.5 L12 0.5 Z M4 15.5 L8 11.5 L12 15.5 Z" fill="#afb1b3"/></svg>
<div class="a" style="left:382px;top:949px;width:1px;height:20px;background:#515457;"></div>
<svg style="left:395px;top:950px;" width="18" height="18" viewBox="0 0 18 18"><g transform="translate(9 9)"><rect x="-2.2" y="-8.3" width="4.4" height="4.5" transform="rotate(30)" fill="#afb1b3"/><rect x="-2.2" y="-8.3" width="4.4" height="4.5" transform="rotate(90)" fill="#afb1b3"/><rect x="-2.2" y="-8.3" width="4.4" height="4.5" transform="rotate(150)" fill="#afb1b3"/><rect x="-2.2" y="-8.3" width="4.4" height="4.5" transform="rotate(210)" fill="#afb1b3"/><rect x="-2.2" y="-8.3" width="4.4" height="4.5" transform="rotate(270)" fill="#afb1b3"/><rect x="-2.2" y="-8.3" width="4.4" height="4.5" transform="rotate(330)" fill="#afb1b3"/><circle r="6.3" fill="#afb1b3"/><circle r="2.4" fill="#3c3f41"/></g></svg>
<div class="a" style="left:428px;top:958px;width:16px;height:2px;background:#afb1b3;"></div>
<svg style="left:39px;top:983.5px;" width="8" height="12" viewBox="0 0 8 12"><path d="M1.5 1 L6.5 6 L1.5 11" fill="none" stroke="#afb1b3" stroke-width="1.5"/></svg>
<svg style="left:61px;top:980px;" width="20" height="20" viewBox="0 0 20 20"><rect x="0" y="1" width="13" height="14" fill="#3b8fb2"/><circle cx="13" cy="14" r="6" fill="#3c3f41"/><circle cx="13" cy="14" r="4.8" fill="#afb1b3"/><path d="M10 12 Q13 13.5 11.5 17 M14 10 Q15 13 17 12.5" stroke="#3c3f41" stroke-width="1.3" fill="none"/></svg>
<div class="t " style="left:82px;top:979.5px;color:#bbbbbb;font-size:16px;">Web (in spring_base_config)</div>
<svg style="left:39px;top:1008.5px;" width="8" height="12" viewBox="0 0 8 12"><path d="M1.5 1 L6.5 6 L1.5 11" fill="none" stroke="#afb1b3" stroke-width="1.5"/></svg>
<svg style="left:61px;top:1006px;" width="20" height="20" viewBox="0 0 20 20"><rect x="0" y="1" width="13" height="14" fill="#3b8fb2"/><circle cx="13" cy="14" r="6" fill="#3c3f41"/><circle cx="13" cy="14" r="4.8" fill="#afb1b3"/><path d="M10 12 Q13 13.5 11.5 17 M14 10 Q15 13 17 12.5" stroke="#3c3f41" stroke-width="1.3" fill="none"/></svg>
<div class="t " style="left:82px;top:1004.5px;color:#bbbbbb;font-size:16px;">Web (in Demo01_introduction)</div>
<div class="t " style="left:36px;top:1083px;color:#bbbbbb;font-size:15.5px;">Services</div>
<svg style="left:1135px;top:1084px;" width="18" height="18" viewBox="0 0 18 18"><circle cx="9" cy="9" r="7.8" fill="none" stroke="#afb1b3" stroke-width="2"/><path d="M9 1.5 V6 M9 12 V16.5 M1.5 9 H6 M12 9 H16.5" stroke="#afb1b3" stroke-width="2"/></svg>
<div class="a" style="left:1163px;top:1083px;width:1px;height:20px;background:#515457;"></div>
<svg style="left:1176px;top:1084px;" width="18" height="18" viewBox="0 0 18 18"><g transform="translate(9 9)"><rect x="-2.2" y="-8.3" width="4.4" height="4.5" transform="rotate(30)" fill="#afb1b3"/><rect x="-2.2" y="-8.3" width="4.4" height="4.5" transform="rotate(90)" fill="#afb1b3"/><rect x="-2.2" y="-8.3" width="4.4" height="4.5" transform="rotate(150)" fill="#afb1b3"/><rect x="-2.2" y="-8.3" width="4.4" height="4.5" transform="rotate(210)" fill="#afb1b3"/><rect x="-2.2" y="-8.3" width="4.4" height="4.5" transform="rotate(270)" fill="#afb1b3"/><rect x="-2.2" y="-8.3" width="4.4" height="4.5" transform="rotate(330)" fill="#afb1b3"/><circle r="6.3" fill="#afb1b3"/><circle r="2.4" fill="#3c3f41"/></g></svg>
<div class="a" style="left:1209px;top:1092px;width:16px;height:2px;background:#afb1b3;"></div>
<svg style="left:37px;top:1121px;" width="19" height="18" viewBox="0 0 19 18"><path d="M4 13 A6.5 6.5 0 1 1 13.5 4.5" fill="none" stroke="#499c54" stroke-width="2.6"/><path d="M10.5 0.5 L17 3.5 L12 8.5 Z" fill="#499c54"/><rect x="10" y="11" width="7" height="7" fill="#afb1b3"/></svg>
<svg style="left:37px;top:1151px;" width="19" height="19" viewBox="0 0 19 19"><ellipse cx="8" cy="10" rx="5" ry="6.5" fill="#499c54"/><path d="M1 7 H15 M1 11 H15 M1 15 H13 M4 2 L6 4 M12 2 L10 4" stroke="#499c54" stroke-width="2"/><rect x="10" y="11" width="7" height="7" fill="#afb1b3"/></svg>
<div class="a" style="left:40px;top:1187px;width:12px;height:12px;background:#db5c5c;"></div>
<svg style="left:37px;top:1216px;" width="19" height="18" viewBox="0 0 19 18"><path d="M0 9 H16 M11.5 4.5 L16.5 9 L11.5 13.5" fill="none" stroke="#499c54" stroke-width="2"/><path d="M4 1 L8 4 M4 17 L8 14" stroke="#499c54" stroke-width="2"/></svg>
<svg style="left:36px;top:1248px;" width="21" height="21" viewBox="0 0 21 21"><path d="M10.5 0 L15 4.5 L10.5 9 L6 4.5 Z" fill="#afb1b3"/><path d="M10.5 12 L15 16.5 L10.5 21 L6 16.5 Z" fill="#afb1b3"/><path d="M4.5 6 L9 10.5 L4.5 15 L0 10.5 Z" fill="#40b6e0"/><path d="M16.5 6 L21 10.5 L16.5 15 L12 10.5 Z" fill="#40b6e0"/></svg>
<svg style="left:37px;top:1282px;" width="19" height="18" viewBox="0 0 19 18"><path d="M18 5 A5.5 5.5 0 0 1 10.5 10.5 L4 17.5 L1 14.5 L7.5 7.5 A5.5 5.5 0 0 1 13 0.5 L10.5 3.5 L11.5 6.5 L14.5 7.5 Z" fill="#afb1b3"/></svg>
<div class="a" style="left:34px;top:1311px;width:24px;height:1px;background:#4b4e50;"></div>
<svg style="left:38px;top:1324px;" width="16" height="16" viewBox="0 0 16 16"><path d="M13 9 A5.5 5.5 0 1 1 10.5 3.8" fill="none" stroke="#afb1b3" stroke-width="2.4"/><path d="M9 0.5 L15 1.5 L13 7 Z" fill="#afb1b3"/></svg>
<div class="a" style="left:34px;top:1353px;width:24px;height:1px;background:#4b4e50;"></div>
<svg style="left:38px;top:1368px;" width="16" height="13" viewBox="0 0 16 13"><rect x="0" y="0" width="7" height="5" fill="#afb1b3"/><rect x="8.5" y="0" width="7.5" height="5" fill="#afb1b3"/><rect x="0" y="7" width="16" height="5.5" fill="#afb1b3"/></svg>
<svg style="left:73px;top:1117px;" width="16" height="18" viewBox="0 0 16 18"><path d="M0 1 H16 M0 17 H16" stroke="#afb1b3" stroke-width="2"/><path d="M4 7.5 L8 4 L12 7.5 Z M4 10.5 L8 14 L12 10.5 Z" fill="#afb1b3"/></svg>
<svg style="left:106px;top:1118px;" width="16" height="16" viewBox="0 0 16 16"><path d="M0 8 H16" stroke="#afb1b3" stroke-width="2"/><path d="M4 0.5 L8 4.5 L12 0.5 Z M4 15.5 L8 11.5 L12 15.5 Z" fill="#afb1b3"/></svg>
<div class="a" style="left:135px;top:1115px;width:1px;height:22px;background:#515457;"></div>
<svg style="left:149px;top:1119px;" width="17" height="17" viewBox="0 0 17 17"><rect x="0" y="0" width="5" height="5" fill="#afb1b3"/><rect x="7" y="0" width="5" height="5" fill="#afb1b3"/><rect x="0" y="7" width="5" height="5" fill="#afb1b3"/><rect x="7" y="7" width="5" height="5" fill="#afb1b3"/><path d="M11 13 H17 L14 16 Z" fill="#afb1b3"/></svg>
<svg style="left:179px;top:1118px;" width="20" height="18" viewBox="0 0 20 18"><path d="M0 0 H15 L9.5 7 V15 L5.5 12 V7 Z" fill="#afb1b3"/><path d="M14 13 H20 L17 16 Z" fill="#afb1b3"/></svg>
<svg style="left:210px;top:1117px;" width="21" height="18" viewBox="0 0 21 18"><path d="M1 17 V5 Q1 1 5 1 H16 Q20 1 20 5 V17" fill="none" stroke="#afb1b3" stroke-width="1.8"/><path d="M10.5 5 V13 M6.5 9 H14.5" stroke="#afb1b3" stroke-width="1.8"/></svg>
<div class="a" style="left:241px;top:1115px;width:1px;height:22px;background:#515457;"></div>
<svg style="left:253px;top:1118px;" width="20" height="17" viewBox="0 0 20 17"><path d="M7 1 V14 M0.5 7.5 H13.5" stroke="#afb1b3" stroke-width="2"/><path d="M13 12 H19 L16 15 Z" fill="#afb1b3"/></svg>
<svg style="left:73px;top:1154.5px;" width="12" height="8" viewBox="0 0 12 8"><path d="M1 1.5 L6 6.5 L11 1.5" fill="none" stroke="#afb1b3" stroke-width="1.5"/></svg>
<svg style="left:97px;top:1150px;" width="18" height="16" viewBox="0 0 18 16"><path d="M1 11 Q5 9 9 10 L13 13 L12 15 Q7 13 2 13 Z" fill="#cfb14a"/><path d="M7 4 L8 1.5 L10 3 H13 L15 1.5 L15.5 4 Q16 9 12 10 Q8 9 7 4 Z" fill="#efe2a8"/><path d="M6.5 2 L8.5 4.5 M15.5 2 L13.5 4.5" stroke="#1a1a1a" stroke-width="1.3"/><circle cx="9.5" cy="8" r="1.1" fill="#1a1a1a"/><path d="M2 12 L0 14" stroke="#1a1a1a" stroke-width="1.2"/></svg>
<div class="t " style="left:119.5px;top:1149.5px;color:#bbbbbb;font-size:16px;">Tomcat Server</div>
<svg style="left:96px;top:1179.3px;" width="12" height="8" viewBox="0 0 12 8"><path d="M1 1.5 L6 6.5 L11 1.5" fill="none" stroke="#afb1b3" stroke-width="1.5"/></svg>
<svg style="left:121px;top:1175px;" width="15" height="16" viewBox="0 0 15 16"><path d="M0 0 L14 8 L0 16 Z" fill="#499c54"/></svg>
<div class="t " style="left:141.5px;top:1174.3px;color:#bbbbbb;font-size:16px;">Running</div>
<svg style="left:118px;top:1204.2px;" width="12" height="8" viewBox="0 0 12 8"><path d="M1 1.5 L6 6.5 L11 1.5" fill="none" stroke="#afb1b3" stroke-width="1.5"/></svg>
<svg style="left:143px;top:1199px;" width="18" height="16" viewBox="0 0 18 16"><path d="M1 11 Q5 9 9 10 L13 13 L12 15 Q7 13 2 13 Z" fill="#cfb14a"/><path d="M7 4 L8 1.5 L10 3 H13 L15 1.5 L15.5 4 Q16 9 12 10 Q8 9 7 4 Z" fill="#efe2a8"/><path d="M6.5 2 L8.5 4.5 M15.5 2 L13.5 4.5" stroke="#1a1a1a" stroke-width="1.3"/><circle cx="9.5" cy="8" r="1.1" fill="#1a1a1a"/><path d="M2 12 L0 14" stroke="#1a1a1a" stroke-width="1.2"/></svg>
<svg style="left:152px;top:1206px;" width="10" height="10" viewBox="0 0 10 10"><path d="M1 5 H8 M5 1.5 L8.5 5 L5 8.5" stroke="#499c54" stroke-width="1.8" fill="none"/></svg>
<div class="t" style="left:165px;top:1199px;font-size:16px"><span class="b" style="color:#c8c8c8">Tomcat 9.0.29</span> <span style="color:#8c8c8c">[local]</span></div>
<div class="a" style="left:0;top:0;width:1261px;height:1622px;clip-path:inset(1221px 846px 54px 64px)">
<svg style="left:163px;top:1224px;" width="20" height="20" viewBox="0 0 20 20"><path d="M7 0 L11 4 L7 8 L3 4 Z" fill="#afb1b3"/><path d="M3.5 4.5 L7 8 L3.5 11.5 L0 8 Z" fill="#40b6e0"/><path d="M10.5 4.5 L14 8 L10.5 11.5 L7 8 Z" fill="#40b6e0"/><circle cx="12" cy="13" r="5.5" fill="#3c3f41"/><circle cx="12" cy="13" r="4.2" fill="#afb1b3"/><path d="M9.5 11.5 Q12 12.5 11 15.5" stroke="#3c3f41" stroke-width="1.2" fill="none"/></svg>
<svg style="left:185px;top:1226px;" width="16" height="13" viewBox="0 0 16 13"><path d="M1.5 6.5 L6 11 L14.5 2" fill="none" stroke="#499c54" stroke-width="2.6"/></svg>
<div class="t" style="left:206.5px;top:1224px;font-size:16px"><span style="color:#bbbbbb">spring_base_config:war</span> <span style="color:#8c8c8c">[Synchronized]</span></div>
</div>
<div class="t " style="left:432px;top:1119px;color:#bbbbbb;font-size:14px;">Server</div>
<svg style="left:504px;top:1122px;" width="16" height="14" viewBox="0 0 16 14"><rect x="0" y="0" width="16" height="14" fill="#afb1b3"/><path d="M5 3.5 L9 7 L5 10.5" fill="none" stroke="#3c3f41" stroke-width="2"/></svg>
<div class="t " style="left:527px;top:1119px;color:#bbbbbb;font-size:14px;">Tomcat Localhost Log</div>
<svg style="left:677px;top:1124px;" width="10" height="10" viewBox="0 0 10 10"><path d="M1 1 L9 9 M9 1 L1 9" stroke="#6e7073" stroke-width="1.3"/></svg>
<svg style="left:717px;top:1122px;" width="16" height="14" viewBox="0 0 16 14"><rect x="0" y="0" width="16" height="14" fill="#afb1b3"/><path d="M5 3.5 L9 7 L5 10.5" fill="none" stroke="#3c3f41" stroke-width="2"/></svg>
<div class="t " style="left:741px;top:1119px;color:#bbbbbb;font-size:14px;">Tomcat Catalina Log</div>
<svg style="left:881px;top:1124px;" width="10" height="10" viewBox="0 0 10 10"><path d="M1 1 L9 9 M9 1 L1 9" stroke="#6e7073" stroke-width="1.3"/></svg>
<div class="t " style="left:432px;top:1155px;color:#bbbbbb;font-size:14px;">Deployment</div>
<div class="t " style="left:627px;top:1155px;color:#bbbbbb;font-size:14px;">Output</div>
<svg style="left:419px;top:1189px;" width="17" height="13" viewBox="0 0 17 13"><path d="M1.5 6.5 L6 11 L15 2" fill="none" stroke="#499c54" stroke-width="2.8"/></svg>
<div class="a" style="left:0;top:0;width:1261px;height:1622px;clip-path:inset(1181px 685px 54px 416px)">
<div class="t " style="left:442px;top:1188px;color:#bbbbbb;font-size:16px;">spring_base_config</div>
</div>
<svg style="left:583px;top:1192px;" width="19" height="18" viewBox="0 0 19 18"><path d="M0 9 H16 M11.5 4.5 L16.5 9 L11.5 13.5" fill="none" stroke="#5fb85f" stroke-width="2"/><path d="M4 1 L8 4 M4 17 L8 14" stroke="#5fb85f" stroke-width="2"/></svg>
<svg style="left:583px;top:1225px;" width="19" height="18" viewBox="0 0 19 18"><path d="M0 9 H16 M11.5 4.5 L16.5 9 L11.5 13.5" fill="none" stroke="#5a5d5f" stroke-width="2"/><path d="M4 1 L8 4 M4 17 L8 14" stroke="#5a5d5f" stroke-width="2"/></svg>
<svg style="left:584px;top:1257px;" width="16" height="17" viewBox="0 0 16 17"><path d="M2 7 A6 6 0 0 1 13 4 M14 10 A6 6 0 0 1 3 13" fill="none" stroke="#afb1b3" stroke-width="2.2"/><path d="M10 0 L15 1 L14 6 Z M6 17 L1 16 L2 11 Z" fill="#afb1b3"/></svg>
<div class="a" style="left:0;top:0;width:1261px;height:1622px;clip-path:inset(1181px 64px 54px 611px)">
<div class="t m" style="left:626px;top:1179.00px;color:#f06b68">11-Dec-2022 17:39:12.815 <span style="display:inline-block;width:33px"></span> [Catalina-utility-1]</div>
<svg style="left:877px;top:1179px;" width="33" height="20" viewBox="0 0 33 20"><g fill="none" stroke="#f06b68" stroke-width="1.3"><path d="M4 2 L1 9 M3 6 V18 M7 3 H15 M6 6 H16 M7 9 H15 M7 12 H15 M7 14.5 V18 H15 V14.5 Z"/><path d="M22 2 L20.5 4 M19.5 4 H28 V11 H19.5 Z M19.5 6.5 H28 M19.5 8.8 H28 M18 13 L17.5 17 M21 12.5 V17 Q21 18 23 18 H27 L27.5 16 M24 12.5 L25 14 M29 13 L31 17"/></g></svg>
<div class="t m" style="left:626px;top:1205.25px;color:#f06b68"> org.apache.catalina.startup.HostConfig</div>
<div class="t m" style="left:626px;top:1231.50px;color:#f06b68"> .deployDirectory Deployment of web application</div>
<div class="t m" style="left:626px;top:1257.75px;color:#f06b68"> directory [C:\apache-tomcat-9.0</div>
<div class="t m" style="left:626px;top:1284.00px;color:#f06b68"> .29-windows-x64\apache-tomcat-9.0.29\webapps\manager]</div>
<div class="t m" style="left:626px;top:1310.25px;color:#f06b68">  has finished in [118] ms</div>
<div class="t m" style="left:626px;top:1336.50px;color:#f06b68">11-Dec-2022 17:39:15.216 <span style="display:inline-block;width:33px"></span> [http-nio-8080-exec-6]</div>
<svg style="left:877px;top:1336px;" width="33" height="20" viewBox="0 0 33 20"><g fill="none" stroke="#f06b68" stroke-width="1.3"><path d="M4 2 L1 9 M3 6 V18 M7 3 H15 M6 6 H16 M7 9 H15 M7 12 H15 M7 14.5 V18 H15 V14.5 Z"/><path d="M22 2 L20.5 4 M19.5 4 H28 V11 H19.5 Z M19.5 6.5 H28 M19.5 8.8 H28 M18 13 L17.5 17 M21 12.5 V17 Q21 18 23 18 H27 L27.5 16 M24 12.5 L25 14 M29 13 L31 17"/></g></svg>
<div class="t m" style="left:626px;top:1362.75px;color:#f06b68"> org.springframework.web.servlet.FrameworkServlet</div>
<div class="t m" style="left:626px;top:1389.00px;color:#f06b68"> .initServletBean Initializing Servlet</div>
<div class="t m" style="left:626px;top:1415.25px;color:#f06b68"> &#x27;DispatcherServlet&#x27;</div>
<div class="t m" style="left:626px;top:1441.50px;color:#f06b68">11-Dec-2022 17:39:15.598 <span style="display:inline-block;width:33px"></span> [http-nio-8080-exec-6]</div>
<svg style="left:877px;top:1442px;" width="33" height="20" viewBox="0 0 33 20"><g fill="none" stroke="#f06b68" stroke-width="1.3"><path d="M4 2 L1 9 M3 6 V18 M7 3 H15 M6 6 H16 M7 9 H15 M7 12 H15 M7 14.5 V18 H15 V14.5 Z"/><path d="M22 2 L20.5 4 M19.5 4 H28 V11 H19.5 Z M19.5 6.5 H28 M19.5 8.8 H28 M18 13 L17.5 17 M21 12.5 V17 Q21 18 23 18 H27 L27.5 16 M24 12.5 L25 14 M29 13 L31 17"/></g></svg>
<div class="t m" style="left:626px;top:1467.75px;color:#f06b68"> org.springframework.web.servlet.FrameworkServlet</div>
<div class="t m" style="left:626px;top:1494.00px;color:#f06b68"> .initServletBean Completed initialization in 382 ms</div>
<div class="t m" style="left:626px;top:1520.25px;color:#bbbbbb">user mvc controller is running ...</div>
</div>
<div class="a" style="left:1186px;top:1532px;width:8px;height:30px;background:#505254;"></div>
<svg style="left:1208px;top:1191px;" width="16" height="18" viewBox="0 0 16 18"><path d="M8 17 V2 M2 8 L8 2 L14 8" fill="none" stroke="#afb1b3" stroke-width="2"/></svg>
<svg style="left:1208px;top:1225px;" width="16" height="18" viewBox="0 0 16 18"><path d="M8 1 V16 M2 10 L8 16 L14 10" fill="none" stroke="#afb1b3" stroke-width="2"/></svg>
<div class="a" style="left:1202px;top:1253px;width:28px;height:27px;background:#55585a;border-radius:4px"></div>
<svg style="left:1207px;top:1258px;" width="18" height="17" viewBox="0 0 18 17"><path d="M1 2 H16 M1 7 H13 Q16 7 16 10 Q16 13 13 13 H9 M1 13 H4" fill="none" stroke="#afb1b3" stroke-width="2"/><path d="M10 10 L7 13 L10 16" fill="none" stroke="#afb1b3" stroke-width="1.8"/></svg>
<div class="a" style="left:1202px;top:1285px;width:28px;height:27px;background:#55585a;border-radius:4px"></div>
<svg style="left:1207px;top:1290px;" width="18" height="17" viewBox="0 0 18 17"><path d="M1 3 H6 M1 8 H6 M1 14 H17" fill="none" stroke="#afb1b3" stroke-width="2"/><path d="M12 1 V11 M8.5 7.5 L12 11 L15.5 7.5" fill="none" stroke="#afb1b3" stroke-width="2"/></svg>
<svg style="left:1207px;top:1322px;" width="18" height="18" viewBox="0 0 18 18"><rect x="4" y="0" width="10" height="4" fill="#afb1b3"/><rect x="0" y="5" width="18" height="8" fill="#afb1b3"/><rect x="4" y="10" width="10" height="7" fill="#3c3f41" stroke="#afb1b3" stroke-width="1.6"/></svg>
<svg style="left:1209px;top:1354px;" width="14" height="18" viewBox="0 0 14 18"><rect x="0" y="1.5" width="14" height="3" fill="#afb1b3"/><rect x="4.5" y="0" width="5" height="2" fill="#afb1b3"/><path d="M1.5 6 H12.5 L11.5 18 H2.5 Z" fill="#afb1b3"/></svg>
<div class="a" style="left:65px;top:1555px;width:285px;height:11px;background:#505254;"></div>
<div class="a" style="left:417px;top:1555px;width:122px;height:11px;background:#505254;"></div>
<svg style="left:40px;top:1576px;" width="11" height="14" viewBox="0 0 11 14"><path d="M0 0 L11 7 L0 14 Z" fill="#afb1b3"/></svg>
<div class="t " style="left:61px;top:1574px;color:#bbbbbb;font-size:14px;">Run</div>
<svg style="left:110px;top:1577px;" width="14" height="13" viewBox="0 0 14 13"><rect x="0" y="0" width="3" height="3" fill="#afb1b3"/><rect x="0" y="5" width="3" height="3" fill="#afb1b3"/><rect x="0" y="10" width="3" height="3" fill="#afb1b3"/><rect x="4.5" y="0" width="9.5" height="3" fill="#afb1b3"/><rect x="4.5" y="5" width="9.5" height="3" fill="#afb1b3"/><rect x="4.5" y="10" width="9.5" height="3" fill="#afb1b3"/></svg>
<div class="t " style="left:129px;top:1574px;color:#bbbbbb;font-size:14px;">TODO</div>
<svg style="left:194px;top:1576px;" width="13" height="13" viewBox="0 0 13 13"><circle cx="6.5" cy="6.5" r="6.5" fill="#afb1b3"/><rect x="5.5" y="2.5" width="2" height="5.5" fill="#3c3f41"/><rect x="5.5" y="9" width="2" height="2" fill="#3c3f41"/></svg>
<div class="t " style="left:214px;top:1574px;color:#bbbbbb;font-size:14px;">Problems</div>
<svg style="left:297px;top:1576px;" width="16" height="14" viewBox="0 0 16 14"><rect x="0" y="0" width="16" height="14" fill="#afb1b3"/><path d="M3 3 L7 6 L3 9 M7 11 H12" fill="none" stroke="#3c3f41" stroke-width="1.6"/></svg>
<div class="t " style="left:319px;top:1574px;color:#bbbbbb;font-size:14px;">Terminal</div>
<svg style="left:395px;top:1575px;" width="17" height="17" viewBox="0 0 17 17"><circle cx="7" cy="7" r="6" fill="none" stroke="#afb1b3" stroke-width="1.8"/><path d="M7 3.5 V7 L5 9" fill="none" stroke="#afb1b3" stroke-width="1.5"/><path d="M9 8 L17 12.5 L9 17 Z" fill="#afb1b3"/></svg>
<div class="t " style="left:416px;top:1574px;color:#bbbbbb;font-size:14px;">Profiler</div>
<svg style="left:486px;top:1575px;" width="17" height="17" viewBox="0 0 17 17"><path d="M3 13 L8.5 4 L14 13" fill="none" stroke="#afb1b3" stroke-width="1.6"/><circle cx="8.5" cy="3.5" r="3" fill="#afb1b3"/><circle cx="3" cy="13.5" r="3" fill="#afb1b3"/><circle cx="14" cy="13.5" r="3" fill="#afb1b3"/></svg>
<div class="t " style="left:507px;top:1574px;color:#bbbbbb;font-size:14px;">Endpoints</div>
<svg style="left:594px;top:1575px;" width="17" height="17" viewBox="0 0 17 17"><path d="M1 5 L7 0.5 L10 3.5 L8 5.5 L16.5 14 L14 16.5 L5.5 8 L4 9.5 Z" fill="#afb1b3"/></svg>
<div class="t " style="left:615px;top:1574px;color:#bbbbbb;font-size:14px;">Build</div>
<svg style="left:668px;top:1575px;" width="19" height="17" viewBox="0 0 19 17"><path d="M4 1 H13 L17 8 L13 15 H4 L0 8 Z" fill="#afb1b3"/><path d="M6 4.5 L12 8 L6 11.5 Z" fill="#3c3f41"/><circle cx="15" cy="14" r="3" fill="#1ec23e"/></svg>
<div class="t " style="left:691px;top:1574px;color:#d4d4d4;font-size:14px;">Services</div>
<svg style="left:765px;top:1576px;" width="17" height="14" viewBox="0 0 17 14"><path d="M1 13 Q0 3 9 1.5 Q15 0.5 16.5 0 Q16 11 7 12.5 Q4 13 1 13 Z" fill="#8c8f91"/><path d="M2 12 Q6 6 12 4" stroke="#3c3f41" stroke-width="1.2" fill="none"/></svg>
<div class="t " style="left:786px;top:1574px;color:#bbbbbb;font-size:14px;">Spring</div>
<svg style="left:1138px;top:1575px;" width="16" height="16" viewBox="0 0 16 16"><circle cx="8" cy="8" r="8" fill="#e8a33d"/><rect x="7" y="3.5" width="2" height="6" fill="#3c3f41"/></svg>
<div class="t " style="left:1158px;top:1574px;color:#bbbbbb;font-size:14px;">Event Log</div>
<svg style="left:9px;top:1601px;" width="14" height="14" viewBox="0 0 14 14"><rect x="0.7" y="3.7" width="9.6" height="9.6" fill="none" stroke="#afb1b3" stroke-width="1.3"/><path d="M3.5 3.5 V0.7 H13.3 V10.5 H10.5" fill="none" stroke="#afb1b3" stroke-width="1.3"/></svg>
<div class="t " style="left:35px;top:1598.5px;color:#bbbbbb;font-size:16px;">Build completed successfully in 1 sec, 563 ms (6 minutes ago)</div>
<div class="t " style="left:1156px;top:1600px;color:#bbbbbb;font-size:16px;">27:2</div>
<svg style="left:1200px;top:1598px;" width="15" height="17" viewBox="0 0 15 17"><path d="M3 8 V5 A4 4 0 0 1 11 5" fill="none" stroke="#afb1b3" stroke-width="1.8"/><rect x="3" y="8" width="12" height="9" fill="#afb1b3"/></svg>
<svg style="left:1228px;top:1596px;" width="22" height="22" viewBox="0 0 22 22"><circle cx="9" cy="10" r="7" fill="#afb1b3"/><circle cx="14" cy="9" r="6" fill="#afb1b3"/><text x="7" y="14" font-family="Liberation Sans" font-weight="bold" font-size="11" fill="#3c3f41">?</text><circle cx="16" cy="17" r="4" fill="#3c3f41"/><circle cx="16" cy="17" r="2.8" fill="#afb1b3"/><circle cx="16" cy="17" r="1.2" fill="#3c3f41"/></svg>
<svg style="left:997px;top:1552px;" width="36" height="36" viewBox="0 0 36 36"><g transform="scale(1.0)"><path d="M9 2 L4 11 M4 11 H17 M1 19 H18 M10.5 4 V19 Q9 27 2 33 M11 22 L17 30 M21.5 9 H32.5 V28 H21.5 Z" fill="none" stroke="#000" stroke-opacity="0.55" stroke-width="4.2" transform="translate(1 1)" stroke-linecap="round" stroke-linejoin="round"/><path d="M9 2 L4 11 M4 11 H17 M1 19 H18 M10.5 4 V19 Q9 27 2 33 M11 22 L17 30 M21.5 9 H32.5 V28 H21.5 Z" fill="none" stroke="#ffffff" stroke-width="3.2" stroke-linecap="square" stroke-linejoin="miter"/></g></svg>
<svg style="left:1036px;top:1552px;" width="36" height="36" viewBox="0 0 36 36"><g transform="scale(1.0)"><path d="M29 2 Q18 5 7 6 M11 9.5 L13.5 13.5 M25 9 L22 13.5 M2 19 H34 M18 6.5 V31 Q18 34 13 31" fill="none" stroke="#000" stroke-opacity="0.55" stroke-width="4.2" transform="translate(1 1)" stroke-linecap="round" stroke-linejoin="round"/><path d="M29 2 Q18 5 7 6 M11 9.5 L13.5 13.5 M25 9 L22 13.5 M2 19 H34 M18 6.5 V31 Q18 34 13 31" fill="none" stroke="#ffffff" stroke-width="3.2" stroke-linecap="square" stroke-linejoin="miter"/></g></svg>
<div class="t" style="left:1087px;top:1552px;line-height:38px;font-size:35px;color:#fff;text-shadow:1px 1px 2px rgba(0,0,0,0.7)">@IT</div>
<svg style="left:1155px;top:1552px;" width="36" height="36" viewBox="0 0 36 36"><g transform="scale(1.0)"><path d="M2 7 H34 M11.5 2 V12 M24.5 2 V12 M6 17 H28 Q27.5 26 26 31 Q25 33 21 31 M17 11 Q15 26 4 34 M8 21 L4 28 M30 21 L34 28" fill="none" stroke="#000" stroke-opacity="0.55" stroke-width="4.2" transform="translate(1 1)" stroke-linecap="round" stroke-linejoin="round"/><path d="M2 7 H34 M11.5 2 V12 M24.5 2 V12 M6 17 H28 Q27.5 26 26 31 Q25 33 21 31 M17 11 Q15 26 4 34 M8 21 L4 28 M30 21 L34 28" fill="none" stroke="#ffffff" stroke-width="3.2" stroke-linecap="square" stroke-linejoin="miter"/></g></svg>
<svg style="left:1191px;top:1552px;" width="36" height="36" viewBox="0 0 36 36"><g transform="scale(1.0)"><path d="M2 7 H34 M11.5 2 V12 M24.5 2 V12 M6 17 H28 Q27.5 26 26 31 Q25 33 21 31 M17 11 Q15 26 4 34 M8 21 L4 28 M30 21 L34 28" fill="none" stroke="#000" stroke-opacity="0.55" stroke-width="4.2" transform="translate(1 1)" stroke-linecap="round" stroke-linejoin="round"/><path d="M2 7 H34 M11.5 2 V12 M24.5 2 V12 M6 17 H28 Q27.5 26 26 31 Q25 33 21 31 M17 11 Q15 26 4 34 M8 21 L4 28 M30 21 L34 28" fill="none" stroke="#ffffff" stroke-width="3.2" stroke-linecap="square" stroke-linejoin="miter"/></g></svg>
<svg style="left:1081px;top:1588px;" width="34" height="30" viewBox="0 0 34 30"><g transform="scale(0.92 0.8)"><path d="M2 3 H16 M5 3 V12 M13 3 V12 M5 7 H13 M2 12 H16 M18 3 H30 Q27 9 20 12 M22 5 Q26 9 31 12 M4 15 H30 M17 15 V27 M16 17 L4 24 M18 17 L30 24 M9 20 L4 26 M25 20 L31 26" fill="none" stroke="#2fb39b" stroke-width="5.2" stroke-linecap="square"/></g></svg>
<svg style="left:1112px;top:1588px;" width="34" height="30" viewBox="0 0 34 30"><g transform="scale(0.92 0.8)"><path d="M10 1 L6 5 M6 4 V14 M6 4 H28 M17 4 V14 M7 7.5 H27 M7 11 H27 M6 14 H29 M2 18 H32 M17 15 V28 M15 19 L3 27 M19 19 L31 27" fill="none" stroke="#2fb39b" stroke-width="5.2" stroke-linecap="square"/></g></svg>
<svg style="left:1142px;top:1588px;" width="34" height="30" viewBox="0 0 34 30"><g transform="scale(0.92 0.8)"><path d="M4 4 V29 M4 4 H29 V29 Q29 31 25 30 M9 11 L15 22 M15 11 L9 22 M18 11 L24 22 M24 11 L18 22" fill="none" stroke="#2fb39b" stroke-width="5.2" stroke-linecap="square"/></g></svg></body></html>
